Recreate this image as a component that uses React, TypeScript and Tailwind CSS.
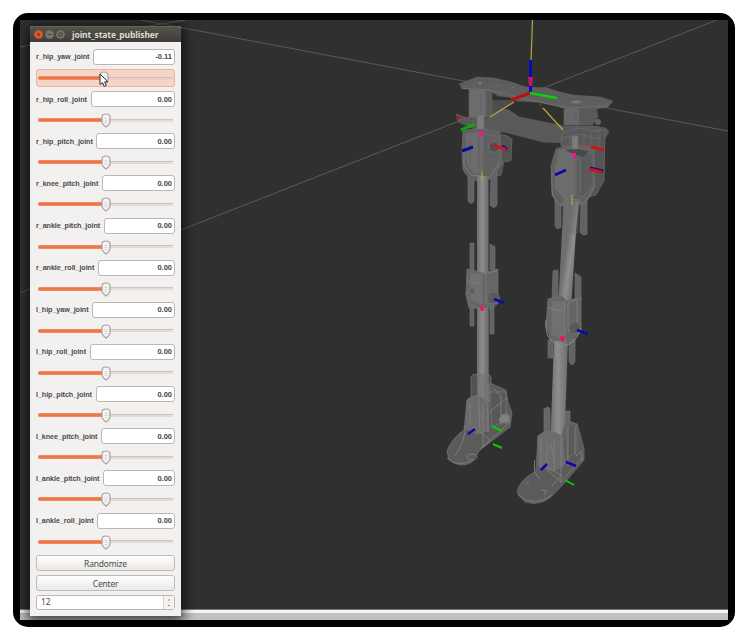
import React from "react";

type Joint = { name: string; value: string; label: string; active?: boolean };

const joints: Joint[] = [
  { name: "r_hip_yaw_joint", value: "-0.11", label: "w-[56.5px]", active: true },
  { name: "r_hip_roll_joint", value: "0.00", label: "w-[54.5px]" },
  { name: "r_hip_pitch_joint", value: "0.00", label: "w-[60px]" },
  { name: "r_knee_pitch_joint", value: "0.00", label: "w-[66px]" },
  { name: "r_ankle_pitch_joint", value: "0.00", label: "w-[68px]" },
  { name: "r_ankle_roll_joint", value: "0.00", label: "w-[62px]" },
  { name: "l_hip_yaw_joint", value: "0.00", label: "w-[56px]" },
  { name: "l_hip_roll_joint", value: "0.00", label: "w-[54px]" },
  { name: "l_hip_pitch_joint", value: "0.00", label: "w-[60px]" },
  { name: "l_knee_pitch_joint", value: "0.00", label: "w-[65px]" },
  { name: "l_ankle_pitch_joint", value: "0.00", label: "w-[67px]" },
  { name: "l_ankle_roll_joint", value: "0.00", label: "w-[61px]" },
];

function Slider({ active }: { active?: boolean }) {
  return (
    <div
      className={
        "relative mt-[4px] flex h-[18px] w-[139px] items-center rounded-[3px] border px-px " +
        (active ? "border-[#efb294] bg-[#f3d6c8]" : "border-transparent")
      }
    >
      <div className={"h-[4px] rounded-l-[2px] border-y border-[#f08a62] bg-[#ee7648] " + (active ? "w-[63px]" : "w-[66px]")} />
      <div className={"h-[3px] flex-1 border-t " + (active ? "border-[#d9b9ac] bg-[#ead0c5]" : "border-[#c9c4c2] bg-[#e0dddb]")} />
      <svg
        className={"absolute top-[1px] h-[15px] w-[10px] " + (active ? "left-[61.5px]" : "left-[63.5px]")}
        viewBox="0 0 10 15"
      >
        <path
          d="M1 4Q1 1 5 1Q9 1 9 4V9Q9 11 5 14Q1 11 1 9Z"
          fill="#f5f3f2"
          stroke="#aaa19c"
          strokeWidth="1.2"
        />
        <path d="M3.5 5.5H6.5M3.5 7.5H6.5M3.5 9.5H6.5" stroke="#d2cecb" strokeWidth=".8" />
      </svg>
      {active && (
        <svg className="absolute left-[62px] top-[3px] z-10 h-[15px] w-[10px]" viewBox="0 0 10 15">
          <path d="M1 1V11.500L3.500 9.500L5.200 13.500L7.200 12.600L5.600 8.800H9Z" fill="#fff" stroke="#333" strokeWidth="1" />
        </svg>
      )}
    </div>
  );
}

function Arm({ d, color, w = 3 }: { d: string; color: string; w?: number }) {
  return <path d={d} stroke={color} strokeWidth={w} fill="none" />;
}

function Robot() {
  return (
    <svg className="absolute inset-0 h-full w-full" viewBox="20 20 708 590">
      <defs>
        <linearGradient id="tube" x1="0" x2="1" y1="0" y2="0">
          <stop offset="0" stopColor="#6e6e6e" />
          <stop offset=".45" stopColor="#8e8e8e" />
          <stop offset="1" stopColor="#6c6c6c" />
        </linearGradient>
        <linearGradient id="tilted-tube" gradientUnits="userSpaceOnUse" x1="555" x2="569" y1="320" y2="321" gradientTransform="rotate(4.500 562 320)">
          <stop offset="0" stopColor="#6e6e6e" />
          <stop offset=".45" stopColor="#8e8e8e" />
          <stop offset="1" stopColor="#6c6c6c" />
        </linearGradient>
      </defs>
      <g stroke="#5a5a5a" strokeWidth="1" fill="none">
        <path d="M141 20L728 131" />
        <path d="M717 20L20 293" />
        <path d="M20 47L186 20" />
      </g>

      {/* pelvis */}
      <g stroke="#646464" strokeWidth=".5" strokeLinejoin="round">
        <path d="M456 114L471 119L499 108L509 110L519 117L549 123L564 126L594 126L606 128L609 132L605 138L565 143L543 142L504 132L475 129L458 122Z" fill="#595959" />
        <path d="M486 100L513 101L500 110L482 122Z" fill="#4d4d4d" />
        <path d="M469 87L486 86V117L469 118Z" fill="#6c6c6c" />
        <path d="M486 87L492 89V115L486 117Z" fill="#5a5a5a" />
        <path d="M459 84L477 77L494 78L511 82L526 87L547 88L560 92L573 95L600 97L613 101L608 107L596 109L567 109L552 105L537 102L517 101L509 97L498 96L489 90L463 89Z" fill="#5e5e5e" />
        <path d="M484 80L510 84L528 91L570 99L605 101" fill="none" stroke="#545454" />
        <path d="M461 88L489 90L530 100L568 108L609 106" fill="none" stroke="#737373" strokeWidth=".8" />
        <path d="M564 109H579V125H564Z" fill="#686868" />
        <path d="M579 109L596 107L598 117L592 125H579Z" fill="#595959" />
      </g>
      <g fill="#777">
        <circle cx="480" cy="83" r="1.600" />
        <circle cx="506" cy="91" r=".8" />
        <circle cx="513" cy="87" r=".8" />
        <circle cx="498" cy="86" r=".7" />
        <circle cx="551" cy="98" r=".8" />
        <path d="M570 102L577 100L583 102L576 104Z" />
        <circle cx="598" cy="122" r="3" fill="#626262" />
      </g>

      {/* right leg */}
      <g stroke="#6e6e6e" strokeWidth=".7" strokeLinejoin="round">
        <path d="M486 135L505 135L512 139L511 160Q508 163 504 161L501 175L488 178Z" fill="#525252" />
        <path d="M468 169H474V201Q471 206 468 201ZM491 171H497V205Q494 210 490 205Z" fill="#636363" />
        <path d="M463 131L478 128L500 132L502 164L492 179L471 181L463 170L462 151Z" fill="#606060" />
        <path d="M466 134L483 131V171L475 174L467 164Z" fill="#6c6c6c" />
        <path d="M484 134L499 137V162L489 175" fill="none" />
        <path d="M464 151V165L471 175L490 177L500 163" fill="none" stroke="#858585" />
        <circle cx="494" cy="147" r="5" fill="#4e4e4e" />
        <path d="M470 141V163M479 137V167M486 136V150M487 158L498 155" fill="none" stroke="#575757" />
        <path d="M477 115H484V129H477Z" fill="#7c7c7c" />
        <path d="M470 243H474V270H470ZM490 244L495 247V270H490ZM470 303H474V326H470ZM490 305H494V334H490Z" fill="#636363" />
      </g>
      <path d="M477 176H488.500V410H477Z" fill="url(#tube)" />
      <g stroke="#747474" strokeWidth=".7" strokeLinejoin="round">
        <path d="M467 269L484 273L498 269V303L488 308L469 308L466 295Z" fill="#666" />
        <path d="M471 274H482V304L471 300Z" fill="#707070" />
        <path d="M482 274L497 271M486 274V304M467 281L480 284" fill="none" stroke="#848484" />
        <circle cx="472" cy="291" r="3" fill="#5c5c5c" />
        <circle cx="493" cy="298" r="6" fill="#5a5a5a" />
        <path d="M466 292Q469 310 485 311Q498 309 500 297" fill="none" />
      </g>
      <path d="M477 311H488.500V395H477Z" fill="url(#tube)" />
      <g stroke="#757575" strokeWidth=".7" strokeLinejoin="round">
        <path d="M471 377Q472 374 476 374H486Q491 374 491 378V401H471Z" fill="#707070" fillOpacity=".55" />
        <path d="M490 383L506 390L508 402L512 413L510 427L493 440L480 450L472 462Q461 469 449 460L447 451Q452 438 464 430L467 400Q475 391 489 402Z" fill="#606060" fillOpacity=".9" />
        <path d="M467 401Q475 390 487 402L489 430L478 434L466 429Z" fill="#6a6a6a" />
        <path d="M490 392L506 392V420L492 427Z" fill="#585858" />
        <path d="M499 419L503 414L510 416L508 423L500 423Z" fill="#828282" />
      </g>
      <g fill="none" stroke="#7f7f7f" strokeWidth=".9">
        <path d="M479 379V408L480 430M488 384V432M493 388L501 396V425M470 403V426M483 403V447L510 422M465 425Q466 441 455 456M473 427L490 440L480 449M447 458Q458 468 473 460M500 418L507 413L510 421L500 422" />
        <ellipse cx="472" cy="457" rx="5" ry="3" />
        <path d="M478 410L483 420M488 413L507 398" />
      </g>

      {/* left leg */}
      <g stroke="#6e6e6e" strokeWidth=".7" strokeLinejoin="round">
        <path d="M584 131L605 130L604 181L596 195L581 199Z" fill="#555" />
        <path d="M555 194L561 197V227Q557 231 555 226ZM581 200H587V234Q583 237 580 232Z" fill="#626262" />
        <path d="M556 149L574 143L594 150L595 186L586 203L561 206L552 195L551 166Z" fill="#606060" />
        <path d="M558 151L575 147V196L565 199L556 188Z" fill="#6c6c6c" />
        <path d="M577 151L593 154V183L584 196H577Z" fill="#5a5a5a" />
        <path d="M552 173V190Q553 205 567 206Q587 209 594 185M556 164V188L565 199L582 200M580 156V193" fill="none" stroke="#808080" />
        <path d="M562 133L580 128L600 132V149L578 147L561 146Z" fill="#595959" />
        <path d="M562 138L579 134L600 139M570 135V146M584 133V149M591 133V144" fill="none" />
        <path d="M564 150L574 148L590 151L583 158L575 155Z" fill="#494949" />
        <path d="M572 136H578V149H572Z" fill="#7c7c7c" />
        <path d="M553 271L558 270V301H552ZM575 273L581 277V301H575ZM548 340H553V358H548ZM569 340L575 338V362Q571 368 569 361Z" fill="#636363" />
      </g>
      <path d="M564 200L579 201L576 232L571 310H558L562 232Z" fill="url(#tilted-tube)" />
      <path d="M554 340H568L564 452H550Z" fill="url(#tube)" />
      <path d="M562 199L580 201L578 234L563 234Z" fill="#6f6f6f" fillOpacity=".4" />
      <g stroke="#747474" strokeWidth=".7" strokeLinejoin="round">
        <path d="M548 299L562 296L567 301L581 297V331L570 343L551 340L546 325Z" fill="#666" />
        <path d="M552 302H564V340L552 334Z" fill="#707070" />
        <path d="M568 303L577 299V326L568 331ZM548 308L562 311M565 301V342" fill="none" stroke="#898989" />
        <circle cx="575" cy="328" r="6" fill="#5a5a5a" />
        <path d="M546 320Q544 344 564 346Q577 343 581 328" fill="none" stroke="#8d8d8d" strokeWidth="1" />
        <path d="M544 409L548 407L550 409V434H544ZM565 411H570V440H565Z" fill="#666" />
        <path d="M566 420L577 424L580 434L584 449V460L566 481L554 494Q542 507 525 502L517 493Q518 481 536 471L538 436Q547 427 561 436Z" fill="#606060" fillOpacity=".9" />
        <path d="M538 437Q547 426 562 436L565 464L555 471L539 467Z" fill="#6c6c6c" />
        <path d="M566 424H577V450L567 459Z" fill="#595959" />
      </g>
      <g fill="none" stroke="#7f7f7f" strokeWidth=".9">
        <path d="M541 438V468M547 442V470L561 482L583 457M554 439V471M561 436V483M568 425V466M575 426V455M535 460Q532 473 540 479M518 495Q534 508 552 495M548 468L561 475L552 486M576 456L581 451L582 461" />
        <path d="M525 484L529 482M541 490L547 491L544 495M550 443L555 460" />
      </g>

      {/* coordinate frames */}
      <g strokeWidth="1.200">
        <path d="M532.500 20L531 62M490 117L514 102M543 108L563 130M482 172V180M572 195V205" stroke="#b4aa3c" />
        <path d="M481 98V112M576 112V135" stroke="#5c5c87" strokeWidth=".9" />
        <path d="M482 134V170M574 153V192M456 118L474 121M535 98L541 106" stroke="#885353" strokeWidth=".9" strokeDasharray="2 2" />
        <path d="M578 145L592 147" stroke="#a05050" />
      </g>
      <Arm d="M530.500 60V92" color="#0808bb" />
      <path d="M528 77H533L532 86H529Z" fill="#c01868" />
      <Arm d="M530 93L511 100" color="#ba1010" />
      <Arm d="M530 93L557 98" color="#08d308" w={2.5} />
      <Arm d="M456 117L460 118" color="#b71212" w={2.5} />
      <Arm d="M461 130L475 124" color="#09a909" />
      <Arm d="M462 151L473 147M502 146L507 149M555 175L566 170M590 168L603 171" color="#0909aa" />
      <Arm d="M494 146L506 149M591 147L604 150M589 169L602 172" color="#ce1414" />
      <path d="M479 131H483V136H479ZM572.500 153H576V158H572.500ZM480 306H484V309H480ZM560 336H565V339H560Z" fill="#ed158c" />
      <Arm d="M482 308V311M562.500 338V341" color="#ea1738" w={2.5} />
      <Arm d="M494 299L504 303M577 330L588 334M468 434L475 429M541 470L547 464M566 462L576 466" color="#0808ad" w={2.5} />
      <Arm d="M492 426L502 431M493 444L502 448M565 480L574 485" color="#09c909" w={2} />
    </svg>
  );
}

function TitleButton({ kind }: { kind: "close" | "min" | "max" }) {
  return (
    <svg className="h-[9px] w-[9px]" viewBox="0 0 9 9">
      <circle cx="4.500" cy="4.500" r="4.300" fill={kind === "close" ? "#e6552a" : "#77756d"} />
      <path
        d={kind === "close" ? "M3 3L6 6M6 3L3 6" : kind === "min" ? "M2.500 4.500H6.500" : "M2.800 3H6.200V6H2.800Z"}
        fill="none"
        stroke="#46352f"
        strokeWidth=".9"
      />
    </svg>
  );
}

function PublisherWindow() {
  return (
    <section className="absolute left-[10px] top-[6px] flex h-[590px] w-[151px] flex-col rounded-t-[3px] bg-[#f2f1f0] shadow-[0_3px_12px_3px_rgba(0,0,0,0.65)]">
      <header className="flex h-[16px] shrink-0 items-center gap-[2px] rounded-t-[3px] border-t border-[#65635a] bg-linear-to-b from-[#55534a] to-[#3e3d38] pl-[4px]">
        <TitleButton kind="close" />
        <TitleButton kind="min" />
        <TitleButton kind="max" />
        <span className="ml-[5px] mt-px whitespace-nowrap font-['Noto_Sans',sans-serif] text-[8.500px] font-bold leading-none tracking-[-0.090px] text-[#dfdbd2]">
          joint_state_publisher
        </span>
      </header>
      <main className="flex flex-col px-[6px] pt-[7px]">
        {joints.map((j) => (
          <div key={j.name} className="h-[42.150px]">
            <div className="flex h-[16px] w-[139px] items-center">
              <label className={"shrink-0 whitespace-nowrap font-['Liberation_Sans',sans-serif] text-[7.200px] font-bold leading-none tracking-[-0.070px] text-[#4b4b4b] " + j.label}>
                {j.name}
              </label>
              <div className="flex h-full flex-1 items-center justify-end rounded-[3px] border border-[#bdb5b2] bg-white pr-[2px] font-['Liberation_Sans',sans-serif] text-[7.500px] font-bold text-[#454545]">
                {j.value}
              </div>
            </div>
            <Slider active={j.active} />
          </div>
        ))}
        <div className="flex w-[139px] flex-col gap-[4px] font-['Noto_Sans',sans-serif] text-[8.500px] tracking-[-0.200px] text-[#4c4c4c]">
          <button className="h-[16px] rounded-[3px] border border-[#c1bbb7] bg-linear-to-b from-white to-[#eae8e6] leading-[15px]">Randomize</button>
          <button className="h-[16px] rounded-[3px] border border-[#c1bbb7] bg-linear-to-b from-white to-[#eae8e6] leading-[15px]">Center</button>
          <div className="flex h-[15px] items-center rounded-[3px] border border-[#bdb5b2] bg-white pl-[4px] leading-none">
            <span className="flex-1 pt-px">12</span>
            <svg className="h-full w-[11px] border-l border-[#d7d2cf] bg-[#f5f4f3]" viewBox="0 0 10 13">
              <path d="M3.500 4.500L5 3L6.500 4.500ZM3.500 9L5 10.500L6.500 9Z" fill="#918b88" />
              <path d="M1 6.500H9" stroke="#dedad8" strokeWidth=".6" />
            </svg>
          </div>
        </div>
      </main>
    </section>
  );
}

export default function App() {
  return (
    <div className="h-[640px] w-[748px] overflow-hidden bg-white pl-[13px] pt-[13px]">
      <div className="h-[614px] w-[722px] rounded-[15px] bg-black p-[7px]">
        <div className="relative flex h-[600px] w-[708px] flex-col overflow-hidden bg-[#303030]">
          <div className="relative h-[590px] shrink-0">
            <Robot />
          </div>
          <div className="-mt-px h-[4px] shrink-0 border-t border-[#777] bg-[#f6f5f4]" />
          <div className="flex-1 bg-[#c2c1c1]" />
          <PublisherWindow />
        </div>
      </div>
    </div>
  );
}
